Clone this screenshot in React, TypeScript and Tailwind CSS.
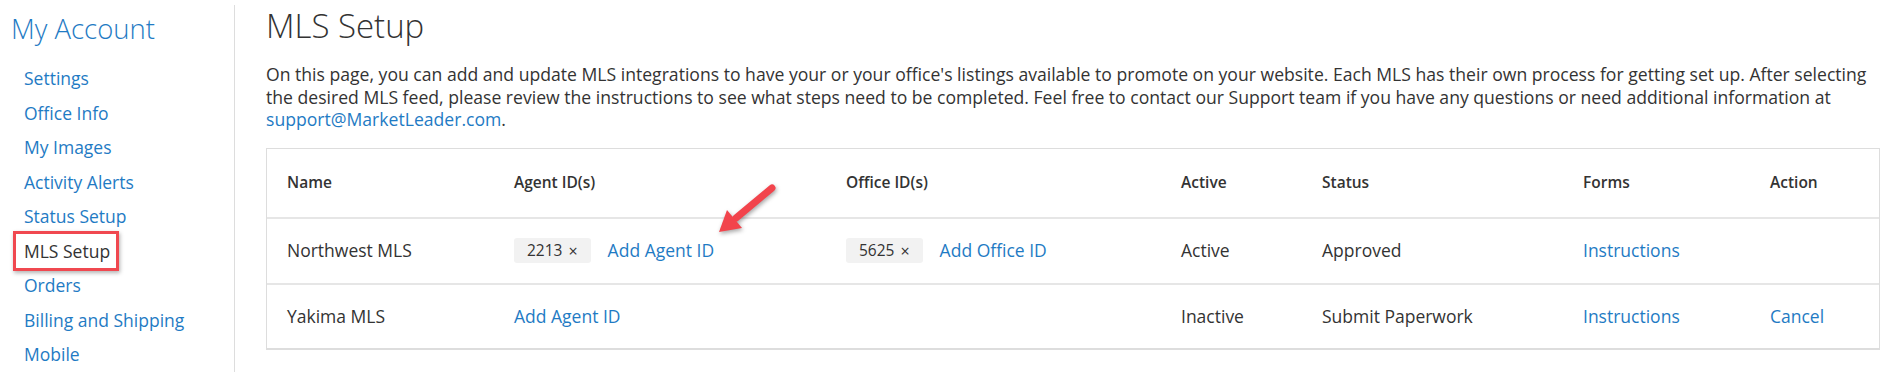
import React from 'react';

const navItems = [
  'Settings',
  'Office Info',
  'My Images',
  'Activity Alerts',
  'Status Setup',
  'MLS Setup',
  'Orders',
  'Billing and Shipping',
  'Mobile',
];

const cols = 'grid grid-cols-[227px_332px_335px_141px_261px_187px_1fr] items-center pl-[20px]';

const Chip: React.FC<{ value: string }> = ({ value }) => (
  <span className="inline-flex items-center h-[25px] pl-[13px] pr-[13px] rounded-[3px] bg-[#f2f2f2] text-[15.5px] text-[#333]">
    {value}
    <span className="ml-[6px] text-[16px]">×</span>
  </span>
);

const Link: React.FC<{ children: React.ReactNode; className?: string }> = ({ children, className }) => (
  <a href="#" className={`text-[#1f7bc4] ${className ?? ''}`}>
    {children}
  </a>
);

const Arrow = () => (
  <svg
    className="absolute left-[439px] top-[29px] drop-shadow-[1px_2px_2px_rgba(0,0,0,0.35)]"
    width="80"
    height="65"
    viewBox="0 0 80 65"
  >
    <line x1="66" y1="10" x2="30" y2="40" stroke="#f2444c" strokeWidth="7" strokeLinecap="round" />
    <polygon points="13,54 36,50 21,32" fill="#f2444c" />
  </svg>
);

export default function App() {
  return (
    <div className="flex min-h-[372px] bg-white font-['Open_Sans',sans-serif] text-[#333]">
      {/* sidebar */}
      <aside className="w-[235px] shrink-0 mt-[5px] border-r border-[#dddddd]">
        <h2 className="pt-[8px] pl-[11px] text-[27.5px] leading-[31px] font-light text-[#1f7bc4]">My Account</h2>
        <ul className="mt-[17px] pl-[24px]">
          {navItems.map((item) =>
            item === 'MLS Setup' ? (
              <li key={item} className="relative text-[17.5px] leading-[34.5px] text-[#333]">
                <span className="absolute -left-[11px] top-[-3px] w-[106px] h-[40px] border-[3px] border-[#f04850] shadow-[1px_2px_4px_rgba(0,0,0,0.3)]" />
                {item}
              </li>
            ) : (
              <li key={item} className="text-[17.5px] leading-[34.5px] text-[#1f7bc4]">
                {item}
              </li>
            )
          )}
        </ul>
      </aside>

      {/* main */}
      <main className="flex-1 pl-[31px] pr-[21px]">
        <h1 className="pt-[7px] text-[33px] leading-[37px] font-light text-[#333]">MLS Setup</h1>
        <p className="mt-[19px] text-[17.6px] leading-[22.5px] text-[#333]">
          On this page, you can add and update MLS integrations to have your or your office's listings available to
          promote on your website. Each MLS has their own process for getting set up. After selecting the desired MLS
          feed, please review the instructions to see what steps need to be completed. Feel free to contact our Support
          team if you have any questions or need additional information at{' '}
          <Link>support@MarketLeader.com</Link>.
        </p>

        <div className="relative mt-[17px] border border-b-2 border-[#dddddd]">
          <div className={`${cols} h-[70px] border-b-2 border-[#e6e6e6] text-[15.5px] font-semibold`}>
            <span>Name</span>
            <span>Agent ID(s)</span>
            <span>Office ID(s)</span>
            <span>Active</span>
            <span>Status</span>
            <span>Forms</span>
            <span>Action</span>
          </div>
          <div className={`${cols} h-[66px] border-b-2 border-[#e6e6e6] text-[17.5px]`}>
            <span>Northwest MLS</span>
            <span className="flex items-center gap-[17px]">
              <Chip value="2213" />
              <Link>Add Agent ID</Link>
            </span>
            <span className="flex items-center gap-[17px]">
              <Chip value="5625" />
              <Link>Add Office ID</Link>
            </span>
            <span>Active</span>
            <span>Approved</span>
            <Link>Instructions</Link>
            <span />
          </div>
          <div className={`${cols} h-[63px] text-[17.5px]`}>
            <span>Yakima MLS</span>
            <Link>Add Agent ID</Link>
            <span />
            <span>Inactive</span>
            <span>Submit Paperwork</span>
            <Link>Instructions</Link>
            <Link>Cancel</Link>
          </div>
          <Arrow />
        </div>
      </main>
    </div>
  );
}
